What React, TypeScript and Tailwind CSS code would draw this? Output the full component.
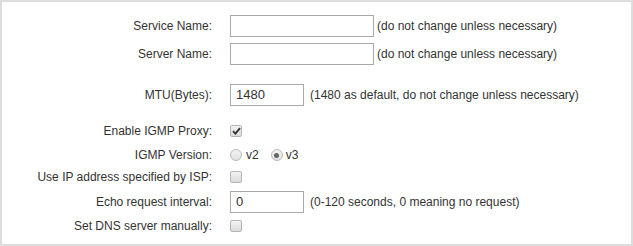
import type { ReactNode } from "react"

function Row({ label, className, children }: { label: string; className?: string; children: ReactNode }) {
  return (
    <div className={`flex h-[22px] items-center ${className ?? ""}`}>
      <div className="w-[210px] shrink-0 text-right">{label}</div>
      <div className="ml-[18px] flex items-center">{children}</div>
    </div>
  )
}

function TextBox({ value = "", wide }: { value?: string; wide?: boolean }) {
  return (
    <div
      className={`flex h-[22px] items-center border border-[#a9a9a9] bg-white pl-[5px] text-[13px] text-[#333] ${
        wide ? "w-[144px]" : "w-[74px]"
      }`}
    >
      {value}
    </div>
  )
}

function Checkbox({ checked }: { checked?: boolean }) {
  return (
    <span className="flex h-[12px] w-[12px] items-center justify-center rounded-[2px] border border-[#b5b5b5] bg-gradient-to-b from-[#f2f2f2] to-[#dcdcdc]">
      {checked && (
        <svg width="9" height="8" viewBox="0 0 9 8">
          <path d="M1 4.2 L3.4 6.6 L8 1.2" fill="none" stroke="#333" strokeWidth="1.9" />
        </svg>
      )}
    </span>
  )
}

function Radio({ checked }: { checked?: boolean }) {
  return (
    <span className="flex h-[12px] w-[12px] items-center justify-center rounded-full border border-[#b9b9b9] bg-gradient-to-b from-[#f4f4f4] to-[#e0e0e0]">
      {checked && <span className="h-[5px] w-[5px] rounded-full bg-[#666]" />}
    </span>
  )
}

export default function App() {
  return (
    <div
      className="h-[246px] w-[633px] border-2 border-[#dddddd] bg-white pt-[13px] text-[12px] text-[#333]"
      style={{ fontFamily: '"Liberation Sans", Arial, sans-serif' }}
    >
      <Row label="Service Name:">
        <TextBox wide />
        <span className="ml-[3px]">(do not change unless necessary)</span>
      </Row>
      <Row label="Server Name:" className="mt-[6px]">
        <TextBox wide />
        <span className="ml-[3px]">(do not change unless necessary)</span>
      </Row>
      <Row label="MTU(Bytes):" className="mt-[19px]">
        <TextBox value="1480" />
        <span className="ml-[6px]">(1480 as default, do not change unless necessary)</span>
      </Row>
      <Row label="Enable IGMP Proxy:" className="mt-[14px]">
        <Checkbox checked />
      </Row>
      <Row label="IGMP Version:" className="mt-[2px]">
        <Radio />
        <span className="ml-[4px]">v2</span>
        <span className="ml-[12px]">
          <Radio checked />
        </span>
        <span className="ml-[3px]">v3</span>
      </Row>
      <Row label="Use IP address specified by ISP:">
        <Checkbox />
      </Row>
      <Row label="Echo request interval:" className="mt-[3px]">
        <TextBox value="0" />
        <span className="ml-[6px]">(0-120 seconds, 0 meaning no request)</span>
      </Row>
      <Row label="Set DNS server manually:" className="mt-[2px]">
        <Checkbox />
      </Row>
    </div>
  )
}
